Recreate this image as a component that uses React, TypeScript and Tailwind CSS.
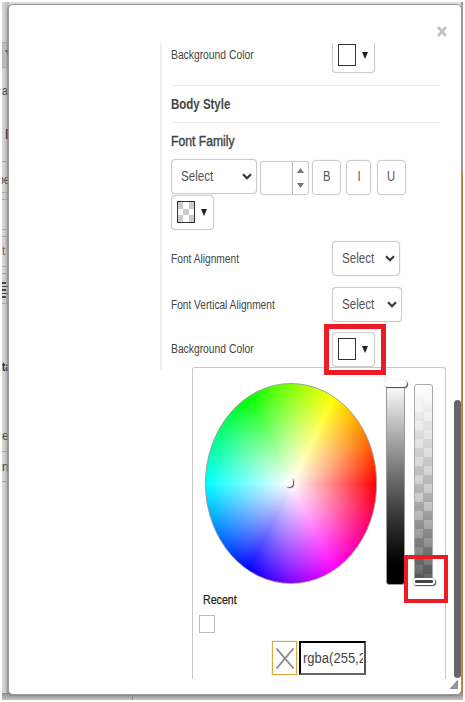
import type { ReactNode } from "react";

function Text({ children, className = "" }: { children: ReactNode; className?: string }) {
  return <span className={`inline-block origin-left whitespace-nowrap ${className}`}>{children}</span>;
}

function Chevron() {
  return (
    <svg width="10" height="7" viewBox="0 0 10 7" fill="none" stroke="#3a3a3a" strokeWidth="2.3">
      <path d="M1 1.200 5 5.200 9 1.200" />
    </svg>
  );
}

function Select({ className = "" }: { className?: string }) {
  return (
    <div className={`flex h-[35px] items-center justify-between rounded border border-[#ccc] bg-white pr-1 pl-[9px] shadow-[0_0_1px_#ccc] ${className}`}>
      <Text className="w-8 scale-x-[0.83] text-[14px] text-[#555]">Select</Text>
      <Chevron />
    </div>
  );
}

function SwatchButton({ checkered = false }: { checkered?: boolean }) {
  return (
    <div className="flex h-[35px] w-[43px] items-center gap-[6px] rounded border border-[#ccc] bg-white pl-[5px] shadow-[0_0_1px_#ccc]">
      <div className="-mt-[2px] h-[22px] w-[18px] border border-[#333] bg-white">
        {checkered && (
          <svg width="16" height="20" viewBox="0 0 16 20" fill="#ccc">
            <path d="M0 0h5v7H0zM11 0h5v7h-5zM5 7h6v6H5zM0 13h5v7H0zM11 13h5v7h-5z" />
          </svg>
        )}
      </div>
      <svg width="6" height="8" viewBox="0 0 6 8" fill="#222" className="-mt-[2px]">
        <path d="M0 1h6L3 8z" />
      </svg>
    </div>
  );
}

function StyleButton({ label, className }: { label: string; className: string }) {
  return (
    <div className={`flex h-[35px] items-center justify-center rounded border border-[#ccc] text-[14px] text-[#555] shadow-[0_0_1px_#ccc] ${className}`}>
      <span className="-mt-[2px] scale-x-[0.8]">{label}</span>
    </div>
  );
}

function Backdrop() {
  return (
    <div className="col-start-1 row-start-1 mt-[2px] ml-[2px] flex h-[698px] w-[461px] flex-col overflow-hidden bg-[#dedede] text-[12px] leading-none text-[#444]">
      <div className="flex flex-1 justify-between">
        <div className="flex w-[7px] flex-col bg-linear-to-r from-[#dadada] to-[#b8b8b8]">
          <div className="mt-[40px] h-[26px] border-y border-[#aaa] bg-[#bbb] pt-[7px] pl-[3px]">
            <svg width="8" height="7" viewBox="0 0 8 7" fill="#555"><path d="M0 0h8L4 7z" /></svg>
          </div>
          <div className="mt-[17px] h-[36px] text-[#345]"><Text className="scale-x-[0.85]">a</Text></div>
          <div className="h-[41px] border-b border-[#aaa] pt-[6px] pl-[3px] text-[14px] font-bold text-[#222]">B</div>
          <div className="h-[31px] border-b border-[#aaa] pt-[12px]"><Text className="-ml-[4px] scale-x-[0.85]">pe</Text></div>
          <div className="mt-[6px] h-[31px] border-y border-r border-[#aaa]" />
          <div className="mt-[6px] h-[31px] border-y border-[#aaa] pt-[8px] text-[#864]">t</div>
          <div className="mt-[6px] flex h-[31px] flex-col gap-[2px] border-y border-[#aaa] pt-[8px]">
            <i className="h-[1.5px] w-[4px] bg-[#444]" />
            <i className="h-[1.5px] w-[7px] bg-[#444]" />
            <i className="h-[1.5px] w-[4px] bg-[#444]" />
            <i className="h-[1.5px] w-[7px] bg-[#444]" />
            <i className="h-[1.5px] w-[4px] bg-[#444]" />
          </div>
          <div className="mt-[57px] h-[69px] font-bold text-[#224]"><Text className="scale-x-[0.8]">ta</Text></div>
          <div className="h-[22px] border-b border-[#aaa]">e</div>
          <div className="h-[30px] border-b border-[#aaa] pt-[9px]">n</div>
        </div>
        <div className="flex w-[2px] flex-col">
          <div className="h-[170px] bg-[#999]" />
          <div className="h-[521px] bg-[#a77e2d]" />
        </div>
      </div>
      <div className="flex h-[7px] bg-linear-to-b from-[#8c8c8c] to-[#c4c4c4]">
        <div className="w-[131px] border-r border-[#888]" />
      </div>
    </div>
  );
}

function ColorPopup() {
  return (
    <div className="absolute top-[324px] left-[32px] flex h-[312px] w-[254px] flex-col rounded-t-[3px] border border-b-0 border-[#c8c8c8] bg-white">
      <div className="flex h-[217px] pt-[15px] pl-[12px]">
        <div className="relative h-[201px] w-[172px]">
          <div className="h-[201px] w-[201px] origin-left scale-x-[0.856] rounded-full border border-[#999] bg-[radial-gradient(closest-side,#fff,rgba(255,255,255,0)),conic-gradient(from_90deg,#f00,#f0f,#00f,#0ff,#0f0,#ff0,#f00)]" />
          <div className="absolute top-[94px] left-[80px] h-[10px] w-[8px] rounded-full bg-white shadow-[1px_1px_1px_#555]" />
        </div>
        <div className="relative mt-px ml-[9px] h-[201px] w-[19px] rounded-[3px] border border-[#999] bg-linear-to-b from-white to-black">
          <div className="absolute -top-[5px] -left-[3px] h-[7px] w-[23px] rounded-[4px] bg-white shadow-[1px_1px_1px_#444,0_0_1px_#aaa]" />
        </div>
        <div className="relative mt-px ml-[9px] h-[201px] w-[19px] rounded-[3px] border border-[#aaa] bg-[linear-gradient(to_bottom,#fff,rgba(130,130,130,0.45)_60%,rgba(30,30,30,0.72)),repeating-conic-gradient(#c8c8c8_0_25%,#fff_0_50%)] bg-[size:auto,17px_18px]">
          <div className="absolute -left-[2px] top-[193px] h-[7px] w-[22px] rounded-[3px] border-2 border-white bg-[#444] shadow-[1px_1px_1px_#444,0_0_1px_#777]" />
        </div>
      </div>
      <div className="h-[30px] pt-[2px] pl-[10px]">
        <Text className="scale-x-[0.85] text-[12.5px] leading-[18px] text-[#222] [-webkit-text-stroke:0.25px_#222]">Recent</Text>
      </div>
      <div className="ml-[6px] h-[18px] w-[16px] border border-[#bbb]" />
      <div className="mt-[8px] ml-[79px] flex h-[34px] gap-[2px]">
        <div className="flex w-[25px] items-center justify-center border border-[#dda83e] shadow-[0_0_1px_#dda83e]">
          <svg width="18" height="21" viewBox="0 0 18 21" stroke="#888" strokeWidth="1.8">
            <path d="M0.5 0.5 17.5 20.5M17.5 0.5 0.5 20.5" />
          </svg>
        </div>
        <div className="flex w-[67px] items-center border-2 border-t-black border-r-[#555] border-b-[#666] border-l-black pl-[2px]">
          <div className="w-[60px] overflow-hidden">
            <Text className="scale-x-[0.84] text-[15.5px] leading-[24px] text-[#444]">rgba(255,255,255,1)</Text>
          </div>
        </div>
      </div>
      <div className="absolute top-[187px] left-[211px] h-[48px] w-[44px] border-4 border-[#ed1c24]" />
    </div>
  );
}

export default function App() {
  return (
    <div className="grid h-[702px] w-[465px] overflow-hidden bg-white font-['Liberation_Sans',Arial,sans-serif] text-[#444]">
      <Backdrop />
      <div className="z-10 col-start-1 row-start-1 mt-[4px] ml-[8px] flex h-[691px] w-[454px] flex-col rounded-[5px] border border-[#999] bg-white shadow-[-1px_1px_2px_#888]">
        <div className="flex h-[38px] justify-end pt-[21px] pr-[14px]">
          <svg width="10" height="11" viewBox="0 0 10 11" stroke="#c4c4c4" strokeWidth="2.7">
            <path d="M1 1 9 10M9 1 1 10" />
          </svg>
        </div>
        <div className="flex h-[636px]">
          <div className="relative ml-[151px] flex h-[636px] w-[286px] flex-col">
            <div className="h-[327px] overflow-hidden border-l-2 border-[#f0f0f0] pl-[9px]">
              <div className="flex h-[43px] w-[269px] border-b border-[#eaeaea]">
                <div className="w-[161px] pt-[2px] leading-[18px]">
                  <Text className="scale-x-[0.86] text-[12px]">Background Color</Text>
                </div>
                <div className="-mt-[5px]"><SwatchButton /></div>
              </div>
              <div className="flex h-[37px] w-[269px] items-center border-b border-[#eaeaea]">
                <Text className="scale-x-[0.82] text-[14px] font-bold">Body Style</Text>
              </div>
              <div className="h-[36px] pt-[8px] leading-[20px]">
                <Text className="scale-x-[0.87] text-[14px] [-webkit-text-stroke:0.4px_#444]">Font Family</Text>
              </div>
              <div className="flex h-[36px]">
                <Select className="w-[86px]" />
                <div className="mt-[2px] ml-[3px] flex h-[34px] w-[49px] rounded-[3px] border border-[#ccc] shadow-[0_0_1px_#ccc]">
                  <div className="flex-1 border-r border-[#bbb]" />
                  <div className="flex w-[15px] flex-col items-center justify-center gap-[10px]">
                    <svg width="7" height="5" viewBox="0 0 7 5" fill="#777"><path d="M0 5h7L3.500 0z" /></svg>
                    <svg width="7" height="5" viewBox="0 0 7 5" fill="#777"><path d="M0 0h7L3.500 5z" /></svg>
                  </div>
                </div>
                <div className="mt-px flex">
                  <StyleButton label="B" className="ml-[3px] w-[29px]" />
                  <StyleButton label="I" className="ml-[5px] w-[25px]" />
                  <StyleButton label="U" className="ml-[6px] w-[29px]" />
                </div>
              </div>
              <div className="h-[46px]"><SwatchButton checkered /></div>
              <div className="flex h-[46px]">
                <div className="w-[161px] pt-[8px] leading-[18px]"><Text className="scale-x-[0.85] text-[12px]">Font Alignment</Text></div>
                <Select className="w-[68px]" />
              </div>
              <div className="flex h-[45px]">
                <div className="w-[161px] pt-[8px] leading-[18px]"><Text className="scale-x-[0.845] text-[12px]">Font Vertical Alignment</Text></div>
                <Select className="w-[70px]" />
              </div>
              <div className="flex h-[38px]">
                <div className="w-[161px] pt-[7px] leading-[18px]"><Text className="scale-x-[0.86] text-[12px]">Background Color</Text></div>
                <SwatchButton />
              </div>
            </div>
            <ColorPopup />
            <div className="absolute top-[281px] left-[164px] h-[51px] w-[62px] border-[5px] border-[#ed1c24]" />
          </div>
          <div className="mt-[357px] ml-[8px] h-[278px] w-[7px] rounded-[4px] bg-[#666]" />
        </div>
        <div className="flex justify-end pt-[1px] pr-[3px]">
          <svg width="8" height="9" viewBox="0 0 8 9" fill="#999" stroke="#777" strokeWidth="0.8">
            <path d="M0.500 8.500 7.500 0.500V8.500z" />
          </svg>
        </div>
      </div>
    </div>
  );
}
